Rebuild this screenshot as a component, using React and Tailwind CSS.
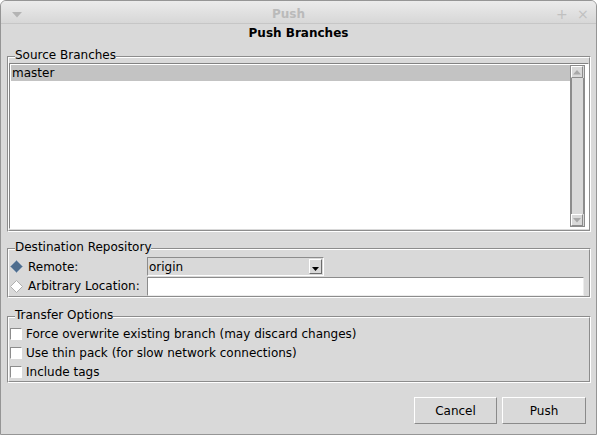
import React from "react";

function Groove({ label, className, innerClassName, children }) {
  return (
    <div className={`relative border border-t-[#8c8c8c] border-l-[#8c8c8c] border-b-white border-r-white ${className}`}>
      <div className={`border border-t-white border-l-white border-b-[#8c8c8c] border-r-[#8c8c8c] ${innerClassName}`}>
        {children}
      </div>
      <span className="absolute left-[7px] top-[-9px] bg-[#d9d9d9] leading-[14px]">{label}</span>
    </div>
  );
}

function Diamond({ checked }) {
  return (
    <svg width="13" height="13" viewBox="0 0 13 13" className="shrink-0">
      <polygon points="6.5,0.5 12.5,6.5 6.5,12.5 0.5,6.5" fill={checked ? "#4e6d8e" : "#ffffff"} stroke={checked ? "#8aa0b8" : "#b0b0b0"} strokeWidth="1" />
    </svg>
  );
}

function CheckRow({ children }) {
  return (
    <div className="flex h-[19px] items-center">
      <span className="ml-[1px] h-[12px] w-[12px] shrink-0 border border-t-[#8c8c8c] border-l-[#8c8c8c] border-b-white border-r-white bg-white" />
      <span className="ml-[4px]">{children}</span>
    </div>
  );
}

function ArrowButton({ down }) {
  return (
    <div className="flex h-[12px] w-[12px] items-center justify-center border border-t-white border-l-white border-b-[#8c8c8c] border-r-[#8c8c8c] bg-[#d9d9d9]">
      <svg width="8" height="5" viewBox="0 0 8 5">
        <polygon points={down ? "0,0 8,0 4,4.5" : "0,4.5 8,4.5 4,0"} fill="#a8a8a8" />
      </svg>
    </div>
  );
}

export default function App() {
  return (
    <div className="flex h-[435px] w-[597px] flex-col overflow-hidden rounded-t-[6px] border border-[#959595] bg-[#d9d9d9] font-['DejaVu_Sans',sans-serif] text-[12px] text-black">
      <div className="relative flex h-[23px] shrink-0 items-center justify-center border-b border-[#c6c6c6] bg-gradient-to-b from-[#ebebeb] to-[#d7d7d7] pt-[3px]">
        <svg width="10" height="6" viewBox="0 0 10 6" className="absolute left-[11px] top-[11px]">
          <polygon points="0,0 10,0 5,5.5" fill="#b4b4b4" />
        </svg>
        <span className="mr-[20px] font-bold text-[#bababa]">Push</span>
        <span className="absolute left-[555px] top-[5px] text-[14px] leading-[16px] text-[#c0c0c0]">+</span>
        <span className="absolute left-[576px] top-[5px] text-[14px] leading-[16px] text-[#c0c0c0]">×</span>
      </div>

      <div className="flex h-[18px] shrink-0 items-center justify-center font-bold">Push Branches</div>

      <div className="pl-[6px]">
        <Groove label="Source Branches" className="mt-[14px] w-[584px]" innerClassName="pt-[5px] pb-[1px]">
          <div className="flex h-[166px] border border-t-[#828282] border-l-[#828282] border-b-white border-r-white bg-white p-[1px]">
            <div className="flex-1">
              <div className="h-[16px] bg-[#c3c3c3] pl-[1px] leading-[16px]">master</div>
            </div>
            <div className="flex w-[15px] flex-col border border-[#8c8c8c] bg-[#d9d9d9] p-[0px]">
              <ArrowButton />
              <div className="flex-1 border-x border-[#8c8c8c]" />
              <ArrowButton down />
            </div>
            <div className="w-[2px]" />
          </div>
        </Groove>

        <Groove label="Destination Repository" className="mt-[16px] w-[584px]" innerClassName="pt-[7px] pr-[5px]">
          <div className="flex h-[19px] items-center">
            <div className="flex w-[138px] items-center pl-[1px]">
              <Diamond checked />
              <span className="ml-[5px]">Remote:</span>
            </div>
            <div className="flex h-[19px] w-[177px] items-center justify-between border border-t-[#8c8c8c] border-l-[#8c8c8c] border-b-white border-r-white bg-[#d9d9d9] pl-[1px] pr-[1px]">
              <span className="leading-[16px]">origin</span>
              <div className="flex h-[15px] w-[13px] items-end justify-center border border-t-white border-l-white border-b-[#6c6c6c] border-r-[#6c6c6c] pb-[2px]">
                <svg width="7" height="4" viewBox="0 0 7 4">
                  <polygon points="0,0 7,0 3.5,4" fill="#000" />
                </svg>
              </div>
            </div>
          </div>
          <div className="flex h-[20px] items-center">
            <div className="flex w-[138px] items-center pl-[1px]">
              <Diamond />
              <span className="ml-[5px]">Arbitrary Location:</span>
            </div>
            <div className="h-[19px] flex-1 border border-t-[#8c8c8c] border-l-[#8c8c8c] border-b-[#ececec] border-r-[#ececec] bg-white" />
          </div>
        </Groove>

        <Groove label="Transfer Options" className="mt-[18px] w-[584px]" innerClassName="pt-[6px]">
          <CheckRow>Force overwrite existing branch (may discard changes)</CheckRow>
          <CheckRow>Use thin pack (for slow network connections)</CheckRow>
          <CheckRow>Include tags</CheckRow>
        </Groove>

        <div className="mt-[14px] flex justify-end gap-[5px] pr-[10px]">
          <button className="h-[27px] w-[83px] border border-t-white border-l-white border-b-[#8a8a8a] border-r-[#8a8a8a] bg-[#d9d9d9]">Cancel</button>
          <button className="h-[27px] w-[84px] border border-t-white border-l-white border-b-[#8a8a8a] border-r-[#8a8a8a] bg-[#d9d9d9]">Push</button>
        </div>
      </div>
    </div>
  );
}
